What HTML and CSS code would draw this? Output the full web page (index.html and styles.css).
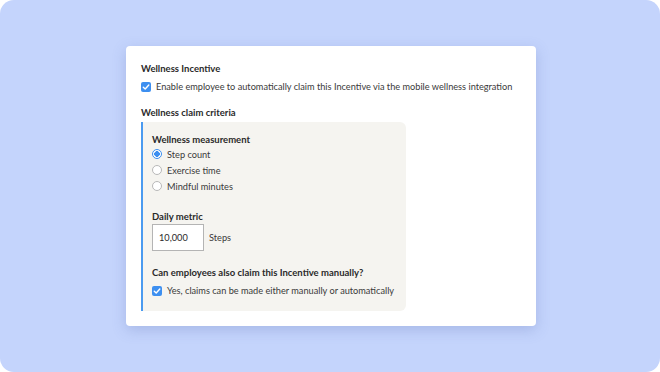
FILE: index.html
```html
<!DOCTYPE html>
<html>
<head>
<meta charset="utf-8">
<link rel="stylesheet" href="styles.css">
</head>
<body>
<div class="stage">
  <div class="card">
    <h2 class="title">Wellness Incentive</h2>
    <label class="check-row">
      <span class="checkbox"><svg viewBox="0 0 10 10" width="10" height="10"><path d="M2.3 5.2 L4.2 7 L7.8 3" fill="none" stroke="#fff" stroke-width="1.4" stroke-linecap="round" stroke-linejoin="round"/></svg></span>
      <span>Enable employee to automatically claim this Incentive via the mobile wellness integration</span>
    </label>
    <h2 class="title sub">Wellness claim criteria</h2>
    <div class="panel">
      <h3 class="label">Wellness measurement</h3>
      <div class="radios">
        <div class="radio-row"><span class="radio on"></span><span>Step count</span></div>
        <div class="radio-row"><span class="radio"></span><span>Exercise time</span></div>
        <div class="radio-row"><span class="radio"></span><span>Mindful minutes</span></div>
      </div>
      <h3 class="label metric">Daily metric</h3>
      <div class="metric-row">
        <div class="input">10,000</div>
        <span>Steps</span>
      </div>
      <h3 class="label manual">Can employees also claim this Incentive manually?</h3>
      <label class="check-row small">
        <span class="checkbox"><svg viewBox="0 0 10 10" width="10" height="10"><path d="M2.3 5.2 L4.2 7 L7.8 3" fill="none" stroke="#fff" stroke-width="1.4" stroke-linecap="round" stroke-linejoin="round"/></svg></span>
        <span>Yes, claims can be made either manually or automatically</span>
      </label>
    </div>
  </div>
</div>
</body>
</html>
```
FILE: styles.css
```css
* { box-sizing: border-box; margin: 0; padding: 0; }
html, body { width: 660px; height: 372px; background: #fff; }
body {
  font-family: Lato, "Noto Sans", sans-serif;
  color: #2f2f2f;
  font-size: 9.2px;
  white-space: nowrap;
}
.stage {
  width: 660px;
  height: 372px;
  background: #c4d4fc;
  border-radius: 14px;
  padding-top: 46px;
  padding-left: 126px;
}
.card {
  width: 410px;
  height: 280px;
  background: #fff;
  border-radius: 4px;
  box-shadow: 0 4px 14px rgba(80, 100, 170, 0.25);
  padding: 16px 15px 0 15px;
}
.title {
  font-size: 9.5px;
  font-weight: 700;
  line-height: 14px;
  color: #2a2a2a;
}
.check-row {
  display: flex;
  align-items: center;
  gap: 5px;
  margin-top: 4px;
  line-height: 14px;
  color: #3a3a3a;
}
.checkbox {
  width: 10px;
  height: 10px;
  border-radius: 2px;
  background: #3d8ff0;
  display: flex;
  flex-shrink: 0;
}
.sub { margin-top: 12px; }
.panel {
  margin-top: 2px;
  width: 265px;
  height: 189px;
  background: #f5f4f0;
  border-left: 2px solid #4a9af0;
  border-radius: 0 6px 6px 0;
  padding: 11px 9px 0 9px;
}
.label {
  font-size: 9.5px;
  font-weight: 700;
  line-height: 14px;
  color: #2a2a2a;
}
.radios { margin-top: -1px; display: flex; flex-direction: column; }
.radio-row {
  display: flex;
  align-items: center;
  gap: 5px;
  height: 16px;
  color: #3a3a3a;
}
.radio {
  width: 10px;
  height: 10px;
  border-radius: 50%;
  border: 1px solid #b8b8b8;
  background: #fff;
  flex-shrink: 0;
}
.radio.on {
  border: 1px solid #3d8ff0;
  background: radial-gradient(circle, #3d8ff0 0 2.6px, #fff 3px);
}
.metric { margin-top: 16px; }
.metric-row {
  margin-top: 0;
  display: flex;
  align-items: center;
  gap: 5px;
  color: #3a3a3a;
}
.input {
  width: 52px;
  height: 27px;
  border: 1px solid #b4b4b4;
  background: #fff;
  padding-left: 6px;
  display: flex;
  align-items: center;
  color: #2a2a2a;
}
.manual { margin-top: 15px; }
.check-row.small { margin-top: 4px; gap: 5px; }
```
